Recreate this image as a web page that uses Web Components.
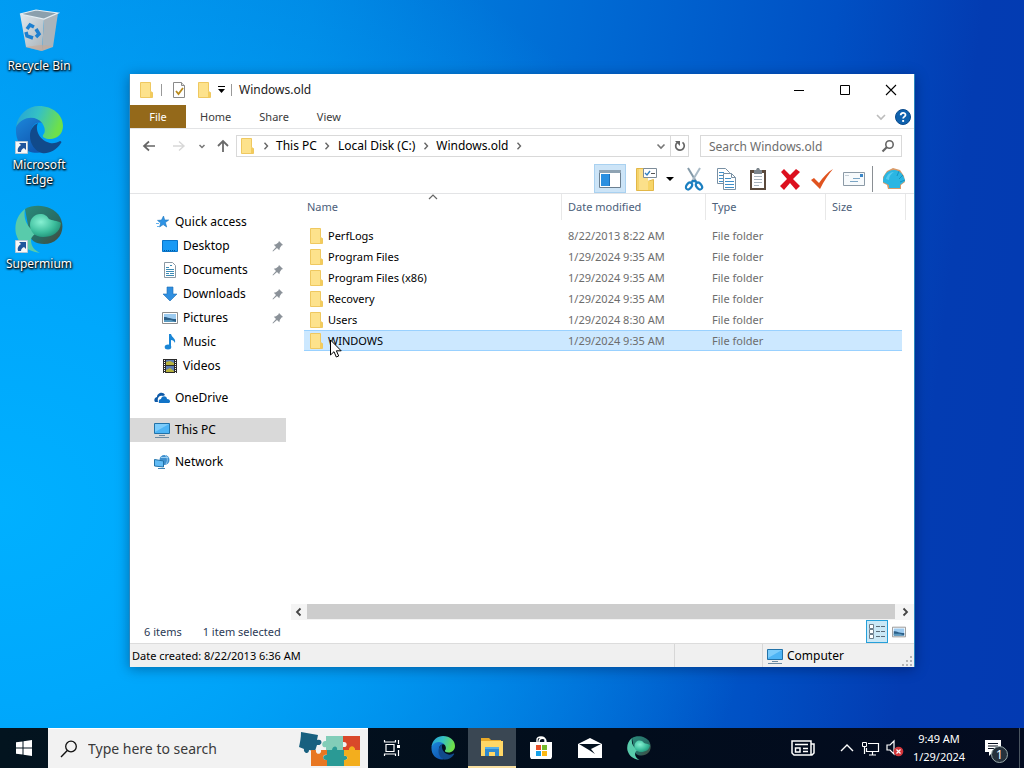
<!DOCTYPE html>
<html lang="en">
<head>
<meta charset="utf-8">
<title>Windows.old</title>
<style>
html, body { margin: 0; height: 100%; overflow: hidden; }
body { font: 12px/16px "Noto Sans", "Open Sans", sans-serif; color: #000; }
</style>
</head>
<body>
<win-desktop></win-desktop>
<script>
const edge = (k) => `<defs><linearGradient id="a${k}" x1="0" y1="0" x2="1" y2=".3"><stop offset="0" stop-color="#249fd8"/><stop offset=".5" stop-color="#35c1c4"/><stop offset="1" stop-color="#6ee04a"/></linearGradient><linearGradient id="b${k}" x1="0" y1="0" x2=".6" y2="1"><stop offset="0" stop-color="#1c88dc"/><stop offset="1" stop-color="#1057b0"/></linearGradient></defs>
<path fill="url(#b${k})" d="M1 22C2 13 10 10 17 10c7 0 11 4 11 8-2-2-6-2-9 1-5 4-3 15 6 20-2 4 0 6 4 7C12 50 0 39 1 22z"/>
<path fill="#114a8b" d="M15 30c0-6 3-11 8-13-3 5 0 17 12 20 4 1 8-1 10-2 1 0 2 1 1 2-5 8-13 11-19 10-7-2-12-9-12-17z"/>
<path fill="url(#a${k})" d="M1 21C3 8 13 0 24 0c14 0 24 9 24 20 0 8-6 13-13 13-5 0-8-2-7-4 3-3 2-8-1-12C22 10 8 9 1 21z"/>`;
const superm = (k) => `<defs><radialGradient id="s${k}" cx=".35" cy=".35" r=".75"><stop offset="0" stop-color="#86f0d2"/><stop offset=".6" stop-color="#3cbd9c"/><stop offset="1" stop-color="#1d8a72"/></radialGradient><linearGradient id="t${k}" x1="0" y1="0" x2="1" y2="1"><stop offset="0" stop-color="#2a8a7a"/><stop offset=".6" stop-color="#286b64"/><stop offset="1" stop-color="#4b4538"/></linearGradient></defs>
<path fill="url(#t${k})" d="M10 4C20-2 38 0 45 12c7 14-2 27-16 27-9 0-13-4-14-8z"/>
<path fill="#58cbab" d="M10 4C2 10-1 20 1 29c3 10 10 17 24 19-6-3-9-7-9-13 0-3 3-5 5-7C12 22 8 14 10 4z"/>
<path fill="url(#s${k})" d="M15 20c0-7 5-11 10-11 5 0 7 2 9 5 3 2 8 1 12 4-1 10-9 14-18 14-8 0-13-5-13-12z"/>`;
const folder = '<path fill="#f8da78" stroke="#efc860" d="M1.500 .5h10v9l2 1v5h-12z"/><path fill="#fde28c" d="M2 1h9v14H2z"/><path fill="#f3cc5c" d="M11 10h2v5h-2z"/>';
const monitor = '<path fill="#4db4f5" stroke="#2272a8" d="M.5 1.500h15v10H.5z"/><path fill="#7cccfb" d="M1 2h14L1 10z"/><path stroke="#6c8ba3" d="M5 13.500h6M1 15.500h14"/>';
const picture = '<path fill="#fff" stroke="#8d8d8d" d="M.5 2.500h15v11H.5z"/><path fill="#9ccbf0" d="M2 4h12v8H2z"/><path fill="#2c5f88" d="M2 7c4 0 6 2 12 2v3H2z"/><path fill="#5b9abf" d="M2 10h7l5 2H2z"/>';
const chev = (d, c, w = 1.500) => `<path fill="none" stroke="${c}" stroke-width="${w}" d="${d}"/>`;
const ICONS = {
  folder: ['0 0 15 16', folder],
  qcheck: ['0 0 16 16', '<path fill="#fff" stroke="#8a8a8a" d="M2.500.5h8l3 3v12h-11z"/><path fill="#ddd" stroke="#8a8a8a" d="M10.500.5v3h3"/>' + chev('M5 9l2.500 3L12 6', '#b98a1c', 1.800)],
  qmore: ['0 0 8 8', '<path d="M0 0h7v1H0zM0 3h7L3.500 7z"/>'],
  min: ['0 0 12 12', '<path d="M1 6h10v1H1z"/>'],
  max: ['0 0 12 12', '<path fill="none" stroke="#000" d="M1.500 1.500h9v9h-9z"/>'],
  close: ['0 0 12 12', chev('M1 1l10 10M11 1L1 11', '#000', 1.100)],
  down: ['0 0 10 10', chev('M1.500 3.500L5 7l3.500-3.500', '#777', 1.600)],
  small: ['0 0 10 10', chev('M2.500 4L5 6.500 7.500 4', '#777', 1.500)],
  downlight: ['0 0 10 10', chev('M1 3l4 4 4-4', '#bcbcbc', 1.600)],
  right: ['0 0 10 10', chev('M3.500 1.800L6.500 5 3.500 8.200', '#666', 1.400)],
  up2: ['0 0 10 10', chev('M1 7l4-4 4 4', '#666', 1.200)],
  sleft: ['0 0 10 10', chev('M6.500 1.500L3 5l3.500 3.500', '#444', 1.800)],
  sright: ['0 0 10 10', chev('M3.500 1.500L7 5l-3.500 3.500', '#444', 1.800)],
  help: ['0 0 16 16', '<circle cx="8" cy="8" r="7.500" fill="#0f62ae" stroke="#0a4a8c"/><path fill="none" stroke="#fff" stroke-width="1.800" d="M5.700 6.300c0-3.200 4.800-3.200 4.800-.3 0 1.700-2.400 1.600-2.400 3.600"/><path fill="#fff" d="M7.200 11h1.900v1.900H7.200z"/>'],
  back: ['0 0 14 14', chev('M13 7H2M7 2.500L2 7l5 4.500', '#666', 1.700)],
  fwd: ['0 0 14 14', chev('M1 7h11M7 2.500L12 7l-5 4.500', '#d8d8d8', 1.400)],
  up: ['0 0 14 14', chev('M7 13V2M2 7l5-5 5 5', '#6a6a6a', 1.800)],
  refresh: ['0 0 14 14', chev('M4.200 3.600A4.300 4.300 0 1 0 9.500 3.400', '#666', 1.700) + '<path fill="#666" d="M2 2h5v5z"/>'],
  mag: ['0 0 14 14', '<circle cx="8.500" cy="5.500" r="3.700" fill="none" stroke="#666" stroke-width="1.600"/>' + chev('M6 8l-4.500 4.500', '#666', 2.200)],
  panel: ['0 0 24 24', '<path fill="#fff" stroke="#6b7f90" d="M1.500 3.500h21v17h-21z"/><path fill="#8fa3b3" d="M1 3h22v3H1z"/><path fill="#2b8fe0" d="M3 7h8v12H3z"/><path fill="#fff" d="M12 7h9v12h-9z"/><path fill="#1d6fb8" d="M11 7h1v12h-1z"/>'],
  fcheck: ['0 0 24 24', '<path fill="#f5d36b" stroke="#e2b747" d="M2.500 1.500h11v13l6-2v11h-17z"/><path fill="#fbe08a" d="M5 2h9v21H5z"/><path fill="#f7d568" d="M14 14h5v9h-5z"/><path fill="#fff" stroke="#7d8c99" d="M9.500 1.500h13v9h-13z"/><path stroke="#555" d="M17 6.500h4"/>' + chev('M11 6l2 2 3-4', '#2f7fc0', 1.300)],
  tri: ['0 0 8 8', '<path d="M0 2h8L4 6z"/>'],
  cut: ['0 0 24 24', chev('M6 1l9 15', '#8399a8', 2) + chev('M18 1L9 16', '#a9bac6', 2) + '<g fill="#fff" stroke="#1b7fc0" stroke-width="2.200"><ellipse cx="7" cy="19" rx="2.500" ry="3.800" transform="rotate(38 7 19)"/><ellipse cx="17" cy="19" rx="2.500" ry="3.800" transform="rotate(-38 17 19)"/></g><path fill="#1b7fc0" d="M10 13h4l2 4-4-2-4 2z"/>'],
  copy: ['0 0 24 24', '<g fill="#fff" stroke="#7890a4"><path d="M3.500 1.500h8l4 4v11h-12z"/><path d="M9.500 6.500h8l4 4v12h-12z"/></g><path stroke="#3f8fc9" d="M5 5.500h5M5 8.500h4M5 11.500h4M5 14.500h4M11 11.500h6M11 14.500h9M11 17.500h9M11 20.500h9"/><path fill="none" stroke="#7890a4" d="M17.500 6.500v4h4"/>'],
  paste: ['0 0 24 24', '<path fill="#5b4a3c" d="M4 3h16v20H4z"/><path fill="#fff" d="M6 6h12v15H6z"/><path fill="#7c858c" d="M8 3h2l1-2h2l1 2h2v4H8z"/><path stroke="#a9b4bd" d="M8 9.500h8M8 12.500h8M8 15.500h8M8 18.500h5"/>'],
  del: ['0 0 24 24', '<path fill="#dc0f1e" d="M3 5l3-3 6 6 6-6 4 3-7 7 7 7-4 4-6-7-6 7-4-4 7-7z"/>'],
  ok: ['0 0 24 24', '<path fill="#e0531f" d="M1 13l3-2 5 5C13 10 18 5 23 2c-5 6-9 12-13 20z"/>'],
  env: ['0 0 24 24', '<path fill="#f7fafc" stroke="#8c9aa6" d="M1.500 5.500h21v13h-21z"/><path fill="#3a86c8" d="M18 7h3v3h-3z"/><path stroke="#7ba5c4" d="M11 11.500h7M8 14.500h8"/><path stroke="#c4ced6" d="M3 8.500h4"/>'],
  shell: ['0 0 24 24', '<path fill="#d89a68" d="M6 22L5 18 1 16 1 10l4-6 6-3 7 2 4 6 1 6-4 3v4z"/><path fill="#2bb6e2" d="M7 21v-3l-6-3C1 8 5 3 12 3c6 0 10 5 11 11l-5 4v3z"/><path fill="none" stroke="#1593c2" d="M15 9l2-5M17 12l4-4M18 15l5-2"/><path fill="#58cbee" d="M4 12c1-4 4-7 8-7-3 2-5 4-5 8z"/>'],
  star: ['0 0 16 16', '<path fill="#2e93e4" stroke="#1a74bd" stroke-width=".6" d="M9.500 2l1.200 4 4 0-3.300 2.600 1.300 4.400L9.200 10.600 5.500 13l1.200-4L3.500 6.400l4-.3z"/><path stroke="#64b3ef" d="M2 9.500h3M3 12.500h2"/>'],
  desk: ['0 0 16 16', '<path fill="#1a9af5" stroke="#0a74c8" d="M.5 2.500h15v11H.5z"/><path stroke="#005a9e" stroke-dasharray="1 1" d="M2 12.500h12"/>'],
  doc: ['0 0 16 16', '<path fill="#fff" stroke="#8b98a3" d="M2.500.5h8l3 3v12h-11z"/><path stroke="#3c8bb5" d="M4 5.500h3M8 3.500h2M4 7.500h8M4 9.500h8M4 11.500h3M8 11.500h4M4 13.500h8"/>'],
  dl: ['0 0 16 16', '<path fill="#2f8fe0" stroke="#1d6db4" stroke-width=".6" d="M5 1h6v7h4l-7 7-7-7h4z"/>'],
  pic: ['0 0 16 16', picture],
  music: ['0 0 16 16', '<ellipse cx="6" cy="13" rx="3.300" ry="2.500" fill="#1a86d6"/><path fill="#1a86d6" d="M7 0h2c1 4 5 4 4 9-1-2-2-3-4-3v7H7z"/>'],
  video: ['0 0 16 16', '<path fill="#2b2b2b" d="M1 1h14v14H1z"/><path fill="#5d7db3" d="M4 2h8v5H4zM4 8h8v6H4z"/><path fill="#b7b33d" d="M4 4l4-1 4 2v2H4zM4 12l4-2 4 3v1H4z"/><path stroke="#fff" stroke-dasharray="1 1" d="M2.500 2v13M13.500 2v13"/>'],
  cloud: ['0 0 16 16', '<path fill="#0e5aa8" d="M1 12c-2-3 1-5 2-5 0-4 6-6 8-2l-2 1c-4-1-6 2-5 6z"/><path fill="#1173c7" d="M5 13c-1-3 1-4 2-4 1-4 6-3 6 0 3 0 4 3 2 4z"/>'],
  pc: ['0 0 16 16', monitor],
  net: ['0 0 16 16', '<circle cx="10.500" cy="6" r="5" fill="#3e8fce"/><path fill="none" stroke="#9bd0f3" d="M11 1c3 3 3 6 1 9M7 3.500h7"/><path fill="#62bbf5" stroke="#2272a8" d="M.5 5.500l9 1.500v6l-9-1z"/><path fill="#3e82b4" d="M4 14h7v1H4z"/>'],
  pin: ['0 0 12 12', '<path fill="#8b9299" d="M7 1l4 4-1.500.6L7.800 8l-.5 2.200-2.300-2.300L1 11.500l-.5-.5L4 7 1.800 4.700 4 4.200 6.400 2.500z"/>'],
  details: ['0 0 18 18', '<g fill="#fff" stroke="#6e7f8d"><path d="M1.500 1.500h4v4h-4zM1.500 6.500h4v4h-4zM1.500 11.500h4v4h-4z"/></g><path stroke="#5b6b78" stroke-dasharray="4 1" d="M8 3.500h9M8 8.500h9M8 13.500h9"/>'],
  grip: ['0 0 12 12', '<path fill="#b5b5b5" d="M8 1h2v2H8zM8 5h2v2H8zM4 5h2v2H4zM8 9h2v2H8zM4 9h2v2H4zM0 9h2v2H0z"/>'],
  cursor: ['0 0 12 19', '<path fill="#fff" stroke="#000" d="M.5 1v15l3.500-3.300 2.300 5.300 2.400-1-2.300-5.200h4.800z"/>'],
  bin: ['0 0 48 48', '<defs><linearGradient id="bn" x2="1" y2="1"><stop stop-color="#dfe8ed"/><stop offset="1" stop-color="#a9b3ba"/></linearGradient></defs><path fill="url(#bn)" d="M5 7l24 5-2 32-16-4z"/><path fill="#aab4bb" d="M29 12l14-6-5 34-11 4z"/><path fill="#8ba0ad" stroke="#e6eef2" stroke-width="1.200" d="M5 7l16-4 22 3-14 6z"/><path fill="#c9a895" d="M10 40l16 4 12-5-12-1z" opacity=".6"/><g fill="none" stroke="#1c7fd0" stroke-width="3.500"><path d="M12 22l3-4 4 2"/><path d="M21 22l3 5-3 3"/><path d="M18 31l-6-2-1-4"/></g>'],
  edge: ['0 0 48 48', edge('x')],
  superm: ['0 0 48 48', superm('x')],
  link: ['0 0 13 13', '<path fill="#f7f7f7" stroke="#b5c7d6" d="M.5.5h12v12H.5z"/><path fill="#20559c" d="M4 2h7v7L9 7c-2 1-3 2-3 4H3c-1-3 0-5 3-7z"/>'],
  start: ['0 0 16 16', '<path fill="#fff" d="M0 2.300l6.500-.9v6.100H0zM7.500 1.200L16 0v7.500H7.500zM0 8.500h6.500v6.100L0 13.700zM7.500 8.500H16V16l-8.500-1.200z"/>'],
  search: ['0 0 18 18', '<circle cx="11" cy="6.500" r="5.300" fill="none" stroke="#111" stroke-width="1.300"/>' + chev('M7.300 10.500L1 17', '#111', 1.400)],
  puzzle: ['0 0 64 38', '<path fill="#18607f" d="M4 2l17 3-1 5c6-2 6 6 0 5l-2 6-6-1c0 5-6 3-5-1l-5-2c1-5 2-9 2-15z"/><path fill="#82cdb8" d="M29 6h17v15H29v-4c-5 2-5-7 0-6z"/><path fill="#d9482a" d="M46 6h17v15h-5c0-5-6-5-6 0h-6v-4c5 1 5-6 0-5z"/><path fill="#e87722" d="M14 20h5c-1 5 6 5 5 0h6v5c-5-2-5 6 0 5v6H14z"/><path fill="#2a9a95" d="M30 20h5c1-5 6-4 5 0h7v6c4-2 5 5 0 4v6H30v-6c-5 1-5-6 0-5z"/><path fill="#f3ae1d" d="M47 20h5c0-5 6-5 6 0h5v16H47v-6c5 1 4-6 0-4z"/>'],
  tview: ['0 0 18 18', '<path fill="none" stroke="#fff" stroke-width="1.200" d="M3 5.500h8v7H3zM1.500 1v2h11V1M1.500 17v-2h11v2M15.500 1v4M15.500 11v6"/><path fill="#fff" d="M14 6h3v3h-3z"/>'],
  explorer: ['0 0 24 24', '<path fill="#e9a928" d="M1 3h8l2 2h10v4H1z"/><path fill="#ffd766" d="M1 6h22v15H1z"/><path fill="#2f8ad0" d="M5 12h14v9h-4v-4H9v4H5z"/><path fill="#56b0e8" d="M5 12h14v2H5z"/>'],
  store: ['0 0 24 24', '<path fill="none" stroke="#fff" stroke-width="1.400" d="M8 7V4c0-4 8-4 8 0v3M10 6c0-5 7-5 7 0"/><path fill="#fff" d="M1 6h22v15l-1 2H2l-1-2z"/><path fill="#e8502a" d="M7 9h5v5H7z"/><path fill="#74b92c" d="M13 9h5v5h-5z"/><path fill="#18a2e8" d="M7 15h5v5H7z"/><path fill="#fbb812" d="M13 15h5v5h-5z"/>'],
  mail: ['0 0 24 24', '<path fill="#fff" d="M0 8l12-6 12 6v14H0z"/><path fill="#04111f" d="M1 8h22l-10 5 4 5-6-4z"/>'],
  news: ['0 0 24 18', '<path fill="none" stroke="#fff" stroke-width="1.500" d="M1 2h19v14H3l-2-2zM20 5h3v9l-2 2h-2M4 5.500h13M12 9.500h5M12 12.500h5"/><path fill="none" stroke="#fff" stroke-width="1.500" d="M4.500 9h4.500v4H4.500z"/>'],
  tup: ['0 0 14 14', chev('M1 10l6-6 6 6', '#fff', 1.400)],
  tnet: ['0 0 18 16', '<path fill="none" stroke="#fff" stroke-width="1.200" d="M6 3.500h10.500v8H4.500V8M10.500 12v3M7 15h7M2.500 7v7"/><path fill="none" stroke="#fff" d="M.5 2.500h4v4h-4z"/>'],
  tvol: ['0 0 18 18', '<path fill="none" stroke="#fff" stroke-width="1.200" d="M1 6h3l4-4v13l-4-4H1z"/><circle cx="12.500" cy="12.500" r="4.800" fill="#d2353a"/><path stroke="#fff" stroke-width="1.200" d="M10.500 10.500l4 4M14.500 10.500l-4 4"/>'],
  note: ['0 0 18 18', '<path fill="#fff" d="M1 1h16v12H9l-4 4v-4H1z"/><path stroke="#07101f" stroke-width="1.200" d="M4 4.500h10M4 7h10M4 9.500h7"/>']
};

/* Defines an element whose shadow root is cloned from a template. */
function define(tag, css, html, setup) {
  const t = document.createElement('template');
  t.innerHTML = `<style>:host{display:block;box-sizing:border-box}*{box-sizing:border-box}button{font:inherit;color:inherit;background:none;border:0;padding:0;margin:0;display:flex;align-items:center;justify-content:center}${css}</style>${html}`;
  customElements.define(tag, class extends HTMLElement {
    constructor() {
      super();
      this.attachShadow({ mode: 'open' }).append(t.content.cloneNode(true));
    }
    connectedCallback() { if (setup) setup(this, this.shadowRoot); }
  });
}

define('ui-icon', ':host{display:inline-block;flex:none}svg{display:block}', '', (el, root) => {
  const [box, body] = ICONS[el.getAttribute('name')];
  const [, , w, h] = box.split(' ').map(Number);
  const width = +(el.getAttribute('w') || w);
  root.innerHTML += `<svg width="${width}" height="${Math.round(width * h / w)}" viewBox="${box}" fill="#000" aria-hidden="true">${body}</svg>`;
});

define('desk-shortcut', `
:host{height:99px;width:78px}
a{display:flex;flex-direction:column;align-items:center;gap:3px;color:#fff;text-decoration:none;text-align:center;line-height:15px;text-shadow:0 1px 2px #000,1px 1px 2px #000,0 0 3px rgba(0,0,0,.7)}
.pic{position:relative;width:48px;height:48px}
.pic .link{position:absolute;left:0;bottom:0}
.cap{width:70px}`,
`<a href="#"><span class="pic"></span><span class="cap"><slot></slot></span></a>`, (el, root) => {
  root.querySelector('.pic').innerHTML = `<ui-icon name="${el.getAttribute('icon')}"></ui-icon>` +
    (el.hasAttribute('linked') ? '<ui-icon class="link" name="link"></ui-icon>' : '');
});

define('title-bar', `
:host{display:flex;align-items:center;height:31px;padding-left:9px}
.sep{width:1px;height:12px;background:#999}
.qat{display:flex;align-items:center}
.qat button{width:16px;height:24px}
.qat .prop{width:34px}
.qat .more{width:19px}
h1{font:inherit;margin:0 0 0 7px;flex:1;color:#222}
.sys{display:flex;align-self:stretch}.sys button{width:46px}
.first{margin-right:7px}`,
`<div class="qat"><ui-icon class="first" name="folder"></ui-icon><span class="sep"></span>
<button class="prop" aria-label="Properties"><ui-icon name="qcheck"></ui-icon></button><button aria-label="New folder"><ui-icon name="folder"></ui-icon></button><button class="more" aria-label="Customize toolbar"><ui-icon name="qmore"></ui-icon></button><span class="sep"></span></div>
<h1>Windows.old</h1>
<div class="sys"><button aria-label="Minimize"><ui-icon name="min"></ui-icon></button><button aria-label="Maximize"><ui-icon name="max"></ui-icon></button><button aria-label="Close"><ui-icon name="close"></ui-icon></button></div>`);

define('ribbon-tabs', `
:host{display:flex;align-items:stretch;height:24px;border-bottom:1px solid #e3e4e6;color:#3b3b3b;font-size:11px}
button{padding:0 14px}
.file{background:#94691a;color:#fff;width:56px}
.end{margin-left:auto;display:flex;align-items:center}
.end button{padding:0;width:22px;height:22px}`,
`<button class="file">File</button><button>Home</button><button>Share</button><button>View</button>
<div class="end"><button aria-label="Expand the ribbon"><ui-icon name="downlight"></ui-icon></button><button aria-label="Help"><ui-icon name="help"></ui-icon></button></div>`);

define('address-bar', `
:host{display:flex;align-items:center;height:34px;padding:0 12px 0 4px}
.nav{display:flex}
.nav button{width:30px;height:22px}.nav .s{width:16px}.nav .u{width:26px}
.box{display:flex;align-items:center;height:22px;border:1px solid #d9d9d9}
.path{flex:1;padding-left:3px;min-width:0}
.path button{height:20px;white-space:nowrap}
.path .c{width:21px}
.path .dd{margin-left:auto;width:18px}
.path .re{width:18px;border-left:1px solid #d9d9d9}
.find{width:202px;margin-left:11px;padding-right:6px}
input{font:inherit;flex:1;min-width:0;border:0;outline:0;padding:0 8px;background:none;height:20px}
input::placeholder{color:#6d6d6d;opacity:1}`,
`<div class="nav"><button aria-label="Back"><ui-icon name="back"></ui-icon></button><button aria-label="Forward"><ui-icon name="fwd"></ui-icon></button><button class="s" aria-label="Recent"><ui-icon name="small"></ui-icon></button><button class="u" aria-label="Up"><ui-icon name="up"></ui-icon></button></div>
<div class="box path"><ui-icon name="folder"></ui-icon><button class="c" aria-label="Expand"><ui-icon name="right"></ui-icon></button><button>This PC</button><button class="c" aria-label="Expand"><ui-icon name="right"></ui-icon></button><button>Local Disk (C:)</button><button class="c" aria-label="Expand"><ui-icon name="right"></ui-icon></button><button>Windows.old</button><button class="c" aria-label="Expand"><ui-icon name="right"></ui-icon></button><button class="dd" aria-label="Previous locations"><ui-icon name="down"></ui-icon></button><button class="re" aria-label="Refresh"><ui-icon name="refresh"></ui-icon></button></div>
<div class="box find"><input type="text" aria-label="Search Windows.old" placeholder="Search Windows.old"><ui-icon name="mag"></ui-icon></div>`);

define('tool-strip', `
:host{display:flex;justify-content:flex-end;align-items:flex-end;height:31px;padding:0 4px 0 0;border-bottom:1px solid #e3e4e6}
button{width:32px;height:29px}
.on{background:#cce4f7;border:1px solid #a9d1f0;margin-right:4px}
.dd{width:16px}
.sep{width:1px;height:26px;margin:0 5px 1px 2px;background:#8a8f94}`,
`<button class="on" aria-label="Navigation pane"><ui-icon name="panel"></ui-icon></button><button aria-label="Folder options"><ui-icon name="fcheck"></ui-icon></button><button class="dd" aria-label="More"><ui-icon name="tri"></ui-icon></button><button aria-label="Cut"><ui-icon name="cut"></ui-icon></button><button aria-label="Copy"><ui-icon name="copy"></ui-icon></button><button aria-label="Paste"><ui-icon name="paste"></ui-icon></button><button aria-label="Delete"><ui-icon name="del"></ui-icon></button><button aria-label="Rename"><ui-icon name="ok"></ui-icon></button><button aria-label="Email"><ui-icon name="env"></ui-icon></button><span class="sep"></span><button aria-label="Classic Shell"><ui-icon name="shell"></ui-icon></button>`);

define('nav-item', `
a{display:flex;align-items:center;gap:5px;height:24px;padding:0 2px 0 24px;color:#000;text-decoration:none}
:host([sub]) a{padding-left:32px}
:host([sub]) .cap{flex:1}
:host([selected]) a{background:#d9d9d9}
:host([spaced]){margin-top:8px}`,
`<a href="#"><span class="ic"></span><span class="cap"><slot></slot></span></a>`, (el, root) => {
  root.querySelector('.ic').outerHTML = `<ui-icon name="${el.getAttribute('icon')}"></ui-icon>`;
  if (el.hasAttribute('pinned')) root.querySelector('a').insertAdjacentHTML('beforeend', '<ui-icon name="pin"></ui-icon>');
});

define('nav-pane', ':host{width:156px;flex:none;padding-top:16px}', `<nav>
<nav-item icon="star">Quick access</nav-item><nav-item sub pinned icon="desk">Desktop</nav-item><nav-item sub pinned icon="doc">Documents</nav-item><nav-item sub pinned icon="dl">Downloads</nav-item><nav-item sub pinned icon="pic">Pictures</nav-item><nav-item sub icon="music">Music</nav-item><nav-item sub icon="video">Videos</nav-item>
<nav-item spaced icon="cloud">OneDrive</nav-item><nav-item spaced selected icon="pc">This PC</nav-item><nav-item spaced icon="net">Network</nav-item></nav>`);

define('file-list', `
:host{flex:1;display:flex;flex-direction:column;min-width:0;margin-left:5px}
.area{flex:1;padding:0 8px 0 13px}
table{width:100%;border-collapse:separate;border-spacing:0;table-layout:fixed;font-size:11px}
th{height:26px;padding:0 0 0 6px;font-weight:400;text-align:left;color:#4c607a;border-right:1px solid #e8e8e8;position:relative}
th:first-child{padding-left:3px}
th ui-icon{position:absolute;left:50%;top:-2px;margin-left:-5px}
thead::after{content:"";display:block;height:5px}
td{height:21px;padding:0 0 0 6px;color:#6d6d6d;white-space:nowrap}
td:first-child{padding-left:5px;color:#000}
td:last-child{border-right:4px solid transparent;background-clip:padding-box}
.name{display:flex;align-items:center;gap:4px;position:relative}
.name .cur{position:absolute;left:21px;top:6px}
.sel td{background-color:#cce8ff;box-shadow:inset 0 1px #99d1ff,inset 0 -1px #99d1ff}
.bar{display:flex;height:16px;background:#f4f4f4}
.bar button{width:16px;height:16px}.bar button:last-child{width:19px}
.thumb{flex:1;background:#cdcdcd;height:15px}`,
`<div class="area"><table><colgroup><col><col style="width:144px"><col style="width:120px"><col style="width:80px"></colgroup>
<thead><tr><th scope="col">Name<ui-icon name="up2"></ui-icon></th><th scope="col">Date modified</th><th scope="col">Type</th><th scope="col">Size</th></tr></thead><tbody></tbody></table></div>
<div class="bar"><button aria-label="Scroll left"><ui-icon name="sleft"></ui-icon></button><div class="thumb"></div><button aria-label="Scroll right"><ui-icon name="sright"></ui-icon></button></div>`, (el, root) => {
  const rows = [['PerfLogs', '8/22/2013 8:22 AM'], ['Program Files', '1/29/2024 9:35 AM'], ['Program Files (x86)', '1/29/2024 9:35 AM'], ['Recovery', '1/29/2024 9:35 AM'], ['Users', '1/29/2024 8:30 AM'], ['WINDOWS', '1/29/2024 9:35 AM']];
  root.querySelector('tbody').innerHTML = rows.map(([n, d]) => {
    const sel = n === 'WINDOWS';
    return `<tr${sel ? ' class="sel"' : ''}><td><span class="name"><ui-icon name="folder"></ui-icon>${n}${sel ? '<ui-icon class="cur" name="cursor"></ui-icon>' : ''}</span></td><td>${d}</td><td>File folder</td><td></td></tr>`;
  }).join('');
});

define('status-bars', `
:host{font-size:11px}
.top{display:flex;align-items:center;height:23px;padding:0 4px 0 14px;color:#2b3a55}
.top span+span{margin-left:21px;flex:1}
.top button{width:22px;height:23px}
.top .on{background:#cbe8f6;border:1px solid #26a0da}
.low{display:flex;align-items:center;height:24px;background:#f0f0f0;border-top:1px solid #dcdcdc;padding-left:2px}
.low .a{flex:1}.low .b{width:89px;align-self:stretch;border:1px solid #d7d7d7;border-width:0 1px}
.low .c{display:flex;align-items:center;gap:4px;width:151px;padding-left:4px;align-self:stretch;font-size:12px}
.low .c ui-icon:last-child{margin-left:auto;align-self:flex-end}`,
`<div class="top"><span>6 items</span><span>1 item selected</span><button class="on" aria-label="Details view"><ui-icon name="details"></ui-icon></button><button aria-label="Thumbnail view"><ui-icon name="pic" w="14"></ui-icon></button></div>
<div class="low"><span class="a">Date created: 8/22/2013 6:36 AM</span><span class="b"></span><span class="c"><ui-icon name="pc"></ui-icon>Computer<ui-icon name="grip"></ui-icon></span></div>`);

define('explorer-window', `
:host{display:flex;flex-direction:column;background:#fff;border:solid #2b86bd;border-width:0 1px;box-shadow:0 2px 12px rgba(0,0,30,.35)}
.body{flex:1;display:flex;min-height:0}`,
`<title-bar></title-bar><ribbon-tabs></ribbon-tabs><address-bar></address-bar><tool-strip></tool-strip><div class="body"><nav-pane></nav-pane><file-list></file-list></div><status-bars></status-bars>`);

define('task-bar', `
:host{display:flex;align-items:stretch;height:40px;background:linear-gradient(90deg,#03141f,#020d1c 60%,#030b20);color:#fff}
.start{width:48px}
.find{display:flex;align-items:center;width:320px;background:#f2f2f2;padding:0 7px 0 12px;border:solid #fff;border-width:1px 0 0}
input{flex:1;min-width:0;font:inherit;font-size:14px;border:0;outline:0;background:none;padding:0 0 0 10px;height:30px}
input::placeholder{color:#3a3a3a;opacity:1}
.apps{display:flex;gap:1px}
.apps button{width:48px}
.apps .view{margin-right:2px}
.apps .on{background:#3a4753;border-bottom:2px solid #f8dfa0}
.tray{margin-left:auto;display:flex;align-items:stretch}
.tray button{width:24px}.tray .news{width:48px;margin-right:8px}
.tray .clock{width:64px;flex-direction:column;line-height:18px;white-space:nowrap;font-size:11px}
.tray .note{width:48px;position:relative;padding-right:4px}
.badge{position:absolute;left:20px;top:18px;width:17px;height:17px;border-radius:50%;border:1px solid #9aa;background:#26313c;line-height:15px}
.end{width:5px;border-left:1px solid #4a5560}`,
`<button class="start" aria-label="Start"><ui-icon name="start"></ui-icon></button>
<div class="find"><ui-icon name="search"></ui-icon><input type="text" aria-label="Type here to search" placeholder="Type here to search"><ui-icon name="puzzle"></ui-icon></div>
<div class="apps"><button class="view" aria-label="Task view"><ui-icon name="tview"></ui-icon></button><button aria-label="Microsoft Edge"><ui-icon name="edge" w="24"></ui-icon></button><button class="on" aria-label="File Explorer"><ui-icon name="explorer"></ui-icon></button><button aria-label="Microsoft Store"><ui-icon name="store"></ui-icon></button><button aria-label="Mail"><ui-icon name="mail"></ui-icon></button><button aria-label="Supermium"><ui-icon name="superm" w="24"></ui-icon></button></div>
<div class="tray"><button class="news" aria-label="News"><ui-icon name="news"></ui-icon></button><button aria-label="Show hidden icons"><ui-icon name="tup"></ui-icon></button><button aria-label="Network"><ui-icon name="tnet"></ui-icon></button><button aria-label="Volume"><ui-icon name="tvol"></ui-icon></button><button class="clock"><span>9:49 AM</span><span>1/29/2024</span></button><button class="note" aria-label="Notifications"><ui-icon name="note"></ui-icon><span class="badge">1</span></button><span class="end"></span></div>`);

define('win-desktop', `
:host{display:flex;flex-direction:column;height:100vh;background:radial-gradient(ellipse 75% 85% at 0 66%,#00b0ff 0,#00a8fc 30%,rgba(0,150,240,0) 100%),linear-gradient(97deg,#0096ee 0,#0086e2 28%,#006bd4 52%,#0050c4 75%,#033cb2 88%,#033ab2 100%)}
main{flex:1;display:flex;min-height:0}
.icons{width:129px;flex:none;padding-top:7px}
explorer-window{flex:1;margin:74px 109px 61px 0;min-width:0}`,
`<main><div class="icons"><desk-shortcut icon="bin">Recycle Bin</desk-shortcut><desk-shortcut linked icon="edge">Microsoft Edge</desk-shortcut><desk-shortcut linked icon="superm">Supermium</desk-shortcut></div><explorer-window></explorer-window></main><task-bar></task-bar>`);
</script>
</body>
</html>
